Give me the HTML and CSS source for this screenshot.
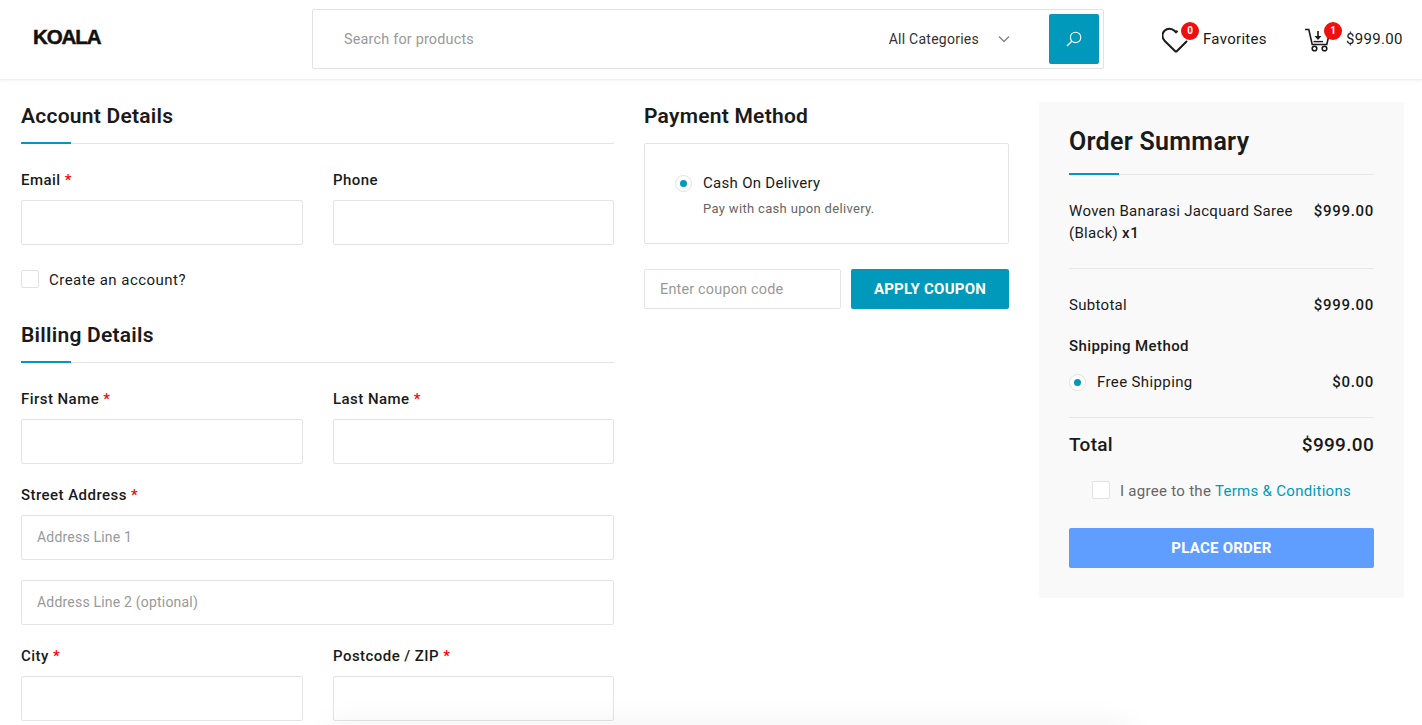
FILE: index.html
```html
<!DOCTYPE html>
<html lang="en">
<head>
<meta charset="utf-8">
<title>Checkout</title>
<link rel="stylesheet" href="styles.css">
</head>
<body>
<header class="header">
  <div class="logo">KOALA</div>
  <form class="search">
    <span class="search-input">Search for products</span>
    <span class="search-cat">All Categories</span>
    <svg class="chevron" viewBox="0 0 12 8"><path d="M1 1.5l5 5 5-5" fill="none" stroke="#888" stroke-width="1.5"/></svg>
    <span class="search-btn">
      <svg viewBox="0 0 16 16" width="16" height="16"><circle cx="9.6" cy="6.4" r="5.2" fill="none" stroke="#fff" stroke-width="1.1"/><path d="M5.8 10.2L1 15" stroke="#fff" stroke-width="1.3" fill="none"/></svg>
    </span>
  </form>
  <div class="hicon fav">
    <svg class="heart" viewBox="0 0 28 28"><path d="M14 26L2.800 15C-.4 11.800-.2 7.400 2.500 4.700 5.400 1.900 9.800 2 12.500 4.800L14 6.400 15.500 4.800M14 26L25 15" fill="none" stroke="#1a1a1a" stroke-width="2"/></svg>
    <span class="badge badge-fav">0</span>
    <span>Favorites</span>
  </div>
  <div class="hicon cart">
    <svg class="carticon" viewBox="0 0 26 24"><path d="M0 1.500h3.800l3.400 15h14.600l1.600-7" fill="none" stroke="#1a1a1a" stroke-width="1.600"/><path d="M13 3v6" fill="none" stroke="#1a1a1a" stroke-width="1.600"/><path d="M9.500 8h7L13 12z" fill="#1a1a1a"/><path d="M8.500 13.600h9.500" fill="none" stroke="#1a1a1a" stroke-width="1.400"/><circle cx="9.500" cy="20.500" r="2.300" fill="none" stroke="#1a1a1a" stroke-width="1.600"/><circle cx="19.500" cy="20.500" r="2.300" fill="none" stroke="#1a1a1a" stroke-width="1.600"/></svg>
    <span class="badge badge-cart">1</span>
    <span>$999.00</span>
  </div>
</header>

<main class="checkout">
  <section class="col-left">
    <h2 class="title">Account Details</h2>
    <div class="row">
      <div class="field"><label class="label">Email <b>*</b></label><div class="input"></div></div>
      <div class="field"><label class="label">Phone</label><div class="input"></div></div>
    </div>
    <div class="check-row"><span class="checkbox"></span><span>Create an account?</span></div>
    <h2 class="title billing">Billing Details</h2>
    <div class="row">
      <div class="field"><label class="label">First Name <b>*</b></label><div class="input"></div></div>
      <div class="field"><label class="label">Last Name <b>*</b></label><div class="input"></div></div>
    </div>
    <div class="field wide"><label class="label">Street Address <b>*</b></label><div class="input">Address Line 1</div></div>
    <div class="input second">Address Line 2 (optional)</div>
    <div class="row city">
      <div class="field"><label class="label">City <b>*</b></label><div class="input"></div></div>
      <div class="field"><label class="label">Postcode / ZIP <b>*</b></label><div class="input"></div></div>
    </div>
  </section>

  <section class="col-mid">
    <h2 class="title plain">Payment Method</h2>
    <div class="pay-box">
      <div class="radio-row"><span class="radio"></span><span>Cash On Delivery</span></div>
      <p class="pay-note">Pay with cash upon delivery.</p>
    </div>
    <div class="coupon">
      <div class="coupon-input">Enter coupon code</div>
      <button class="btn coupon-btn" type="button">APPLY COUPON</button>
    </div>
  </section>

  <aside class="summary">
    <h2 class="title sum-title">Order Summary</h2>
    <div class="sum-item">
      <span>Woven Banarasi Jacquard Saree (Black) <strong>x1</strong></span>
      <strong>$999.00</strong>
    </div>
    <div class="sum-row subtotal"><span>Subtotal</span><strong>$999.00</strong></div>
    <div class="ship-title">Shipping Method</div>
    <div class="sum-row ship"><span class="radio-row small"><span class="radio"></span><span class="ship-name">Free Shipping</span></span><strong>$0.00</strong></div>
    <div class="sum-row total"><span>Total</span><span>$999.00</span></div>
    <div class="terms"><span class="checkbox"></span><span>I agree to the <a href="#">Terms &amp; Conditions</a></span></div>
    <button class="btn place" type="button">PLACE ORDER</button>
  </aside>
</main>
<div class="bottom-shadow"></div>
</body>
</html>
```

FILE: styles.css
```css
* { box-sizing: border-box; }
html, body { margin: 0; height: 725px; overflow: hidden; background: #fff; }
body { font-family: Roboto, "Open Sans", sans-serif; font-size: 15px; color: #1a1a1a; position: relative; letter-spacing: .3px; }

.header { height: 80px; display: flex; align-items: flex-start; border-bottom: 1px solid #eee; box-shadow: 0 1px 3px rgba(0,0,0,.05); }
.logo { margin: 25px 0 0 33px; width: 279px; font: 700 20.5px/24px "Liberation Sans", sans-serif; letter-spacing: -1.1px; color: #111; -webkit-text-stroke: .5px #111; }
.search { margin-top: 9px; width: 792px; height: 60px; border: 1px solid #e2e2e2; border-radius: 2px; display: flex; align-items: center; padding: 0 4px 0 31px; font-size: 14px; }
.search-input { flex: 1; color: #999; font-size: 14.4px; letter-spacing: .2px; }
.search-cat { color: #333; letter-spacing: .25px; }
.chevron { width: 12px; height: 8px; margin: 0 39px 0 19px; }
.search-btn { width: 50px; height: 50px; background: #0099bb; border-radius: 2px; display: flex; align-items: center; justify-content: center; }
.hicon { position: relative; display: flex; align-items: center; height: 60px; margin-top: 9px; }
.fav { margin-left: 58px; width: 143px; }
.heart { width: 28px; height: 28px; margin-right: 13px; margin-top: 2px; flex: none; }
.cart { width: 99px; }
.carticon { width: 26px; height: 24px; margin-right: 15px; margin-top: 1px; flex: none; }
.badge { position: absolute; top: 13px; width: 18px; height: 18px; border-radius: 50%; background: #f40d0d; color: #fff; font-size: 10px; font-weight: 700; line-height: 18px; text-align: center; letter-spacing: 0; }
.badge-fav { left: 19px; }
.badge-cart { left: 19px; }

.checkout { display: grid; grid-template-columns: 593px 365px 365px; column-gap: 30px; padding: 22px 0 0 21px; align-items: start; }
.title { margin: 0; font-size: 21px; line-height: 28px; font-weight: 600; letter-spacing: .25px; color: #1a1a1a; position: relative; padding-bottom: 13px; border-bottom: 1px solid #e4e4e4; }
.title::after { content: ""; position: absolute; left: 0; bottom: -1px; width: 50px; height: 2px; background: #0099bb; }
.title.plain { border-bottom: 0; padding-bottom: 13px; }
.title.plain::after { display: none; }
.billing { margin-top: 30px; }

.row { display: grid; grid-template-columns: 282px 281px; column-gap: 30px; margin-top: 26px; }
.field { display: block; }
.label { display: block; font-size: 15px; line-height: 20px; font-weight: 500; letter-spacing: .45px; margin-bottom: 10px; }
.label b { color: #f00; font-weight: 500; }
.input { height: 45px; border: 1px solid #e4e4e4; border-radius: 2px; padding: 0 15px; line-height: 43px; color: #999; font-size: 14px; letter-spacing: .2px; }
.wide { margin-top: 21px; }
.second { margin-top: 20px; }
.row.city { margin-top: 21px; }
.check-row { display: flex; align-items: center; gap: 10px; margin-top: 24px; height: 22px; letter-spacing: .47px; }
.checkbox { width: 18px; height: 18px; border: 1px solid #e2e2e2; border-radius: 2px; background: #fff; flex: none; margin-bottom: 2px; }

.pay-box { height: 101px; border: 1px solid #e4e4e4; border-radius: 2px; padding: 28px 30px 0; }
.radio-row { display: flex; align-items: center; gap: 11px; height: 22px; }
.radio { width: 17px; height: 17px; border: 1px solid #e2e2e2; border-radius: 50%; background: #fff; position: relative; flex: none; }
.radio::after { content: ""; position: absolute; left: 4px; top: 4px; width: 7px; height: 7px; border-radius: 50%; background: #0099bb; }
.pay-note { margin: 5px 0 0 28px; font-size: 13px; line-height: 20px; color: #666; letter-spacing: .33px; }
.coupon { display: flex; gap: 10px; margin-top: 25px; }
.coupon-input { width: 197px; height: 40px; border: 1px solid #e4e4e4; border-radius: 2px; padding: 0 15px; line-height: 40px; color: #999; font-size: 14.4px; letter-spacing: .2px; }
.btn { border: 0; border-radius: 2px; color: #fff; font-family: inherit; font-weight: 700; font-size: 15px; letter-spacing: .25px; height: 40px; padding: 0; }
.coupon-btn { width: 158px; background: #0099bb; }

.summary { background: #f9f9f9; height: 496px; padding: 25px 30px 0; }
.sum-title { font-size: 25px; line-height: 30px; padding-bottom: 17px; letter-spacing: .3px; border-color: #e8e8e8; }
.sum-item { display: flex; justify-content: space-between; gap: 20px; margin-top: 25px; line-height: 22px; padding-bottom: 24px; border-bottom: 1px solid #e8e8e8; }
.sum-item span { width: 235px; }
strong { font-weight: 500; letter-spacing: .7px; }
.sum-row { display: flex; justify-content: space-between; align-items: center; }
.subtotal { margin-top: 25px; line-height: 22px; }
.ship-title { margin-top: 19px; line-height: 22px; font-weight: 500; letter-spacing: .4px; }
.ship { margin-top: 14px; height: 22px; padding-bottom: 0; }
.ship-name { letter-spacing: .38px; }
.small { gap: 11px; }
.total { margin-top: 24px; padding-top: 14px; border-top: 1px solid #e8e8e8; font-size: 19px; font-weight: 500; line-height: 26px; }
.terms { display: flex; align-items: center; justify-content: center; gap: 10px; margin-top: 22px; height: 22px; color: #666; }
.terms a { color: #0099bb; text-decoration: none; }
.place { display: block; width: 305px; margin-top: 26px; background: #5f9eff; }

.bottom-shadow { position: absolute; left: 0; bottom: 0; width: 100%; height: 40px; overflow: hidden; pointer-events: none; }
.bottom-shadow::before { content: ""; position: absolute; left: 330px; top: 40px; width: 800px; height: 20px; box-shadow: 0 0 30px rgba(0,0,0,.07); }
```
